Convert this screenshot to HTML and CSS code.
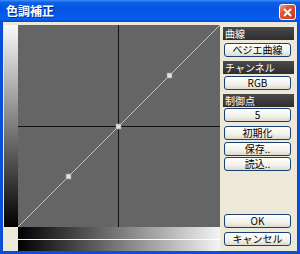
FILE: index.html
```html
<!DOCTYPE html>
<html>
<head>
<meta charset="utf-8">
<link rel="stylesheet" href="styles.css">
</head>
<body>
<div class="window">
  <div class="titlebar">
    <span class="title">色調補正</span>
    <span class="close">
      <svg width="9" height="9" viewBox="0 0 9 9"><path d="M1 1 L8 8 M8 1 L1 8" stroke="#fff" stroke-width="2"/></svg>
    </span>
  </div>
  <div class="client">
    <div class="vbar"></div>
    <div class="graph">
      <svg width="202" height="202" viewBox="0 0 202 202">
        <rect x="0" y="0" width="202" height="202" fill="#656565"/>
        <line x1="100.5" y1="0" x2="100.5" y2="202" stroke="#111" stroke-width="1"/>
        <line x1="0" y1="101.5" x2="202" y2="101.5" stroke="#111" stroke-width="1"/>
        <line x1="0" y1="202" x2="202" y2="0" stroke="#c4c4c4" stroke-width="1"/>
        <rect x="48" y="149" width="5" height="5" fill="#e0e0e0" stroke="#999" stroke-width="0.6"/>
        <rect x="98" y="99" width="5" height="5" fill="#e0e0e0" stroke="#999" stroke-width="0.6"/>
        <rect x="149" y="48" width="5" height="5" fill="#e0e0e0" stroke="#999" stroke-width="0.6"/>
      </svg>
    </div>
    <div class="panel">
      <div class="label">曲線</div>
      <div class="btn b1">ベジエ曲線</div>
      <div class="label l2">チャンネル</div>
      <div class="btn b2">RGB</div>
      <div class="label l3">制御点</div>
      <div class="btn b3">5</div>
      <div class="btn b4">初期化</div>
      <div class="btn b5">保存..</div>
      <div class="btn b6">読込..</div>
      <div class="spacer"></div>
      <div class="btn ok">OK</div>
      <div class="btn cancel">キャンセル</div>
    </div>
    <div class="hbars">
      <div class="hbar h1"></div>
      <div class="hline"></div>
      <div class="hbar h2"></div>
    </div>
  </div>
</div>
</body>
</html>
```
FILE: styles.css
```css
html, body {
  margin: 0;
  padding: 0;
  background: #fff;
}
.window {
  width: 300px;
  height: 254px;
  background: #0b4fd8;
  display: flex;
  flex-direction: column;
  font-family: "Noto Sans CJK JP", "Noto Sans", sans-serif;
}
.titlebar {
  height: 22px;
  flex: none;
  display: flex;
  align-items: center;
  justify-content: space-between;
  padding: 0 4px 0 6px;
  background: linear-gradient(#3d8cf8 0%, #0a5fe8 12%, #0553e2 45%, #0660f0 85%, #0549d3 100%);
}
.title {
  color: #fff;
  font-weight: bold;
  font-size: 12px;
  line-height: 22px;
  text-shadow: 1px 1px 0 #0a2a8a;
  letter-spacing: 0px;
}
.close {
  width: 15px;
  height: 14px;
  margin-top: 2px;
  border: 1px solid #fff;
  border-radius: 3px;
  background: linear-gradient(135deg, #f0a08a 0%, #e2572f 35%, #c9381a 100%);
  display: flex;
  align-items: center;
  justify-content: center;
}
.client {
  flex: 1;
  margin: 0 3px 3px 3px;
  background: #ece9d8;
  display: grid;
  grid-template-columns: 14px 202px 74px;
  grid-template-rows: 202px 24px;
  column-gap: 0;
  padding: 3px 0 0 1px;
  box-sizing: border-box;
}
.vbar {
  grid-column: 1;
  grid-row: 1;
  background: linear-gradient(#fafafa, #000);
}
.graph {
  grid-column: 2;
  grid-row: 1;
  height: 202px;
}
.graph svg {
  display: block;
}
.panel {
  grid-column: 3;
  grid-row: 1 / span 2;
  display: flex;
  flex-direction: column;
  padding: 2px 0 5px 3px;
}
.label {
  height: 13px;
  background: linear-gradient(#4a4a4a, #2e2e2e);
  color: #fff;
  font-size: 10px;
  line-height: 13px;
  padding-left: 2px;
}
.btn {
  height: 12px;
  margin-left: 1px;
  margin-right: 3px;
  border: 1px solid #1c3f75;
  border-radius: 3px;
  background: linear-gradient(#ffffff, #f2f1ea 60%, #dcdad0);
  color: #000;
  font-size: 10px;
  line-height: 12px;
  text-align: center;
}
.b1 { margin-top: 3px; }
.l2 { margin-top: 4px; }
.b2 { margin-top: 2px; }
.l3 { margin-top: 4px; }
.b3 { margin-top: 1px; }
.b4 { margin-top: 4px; }
.b5 { margin-top: 2px; }
.b6 { margin-top: 1px; }
.spacer { flex: 1; }
.cancel { margin-top: 4px; }
.hbars {
  grid-column: 2;
  grid-row: 2;
  display: flex;
  flex-direction: column;
}
.hbar {
  background: linear-gradient(to right, #000, #f4f4f4);
}
.h1 { height: 12px; }
.hline { height: 1px; background: #fff; }
.h2 { height: 11px; }
```
